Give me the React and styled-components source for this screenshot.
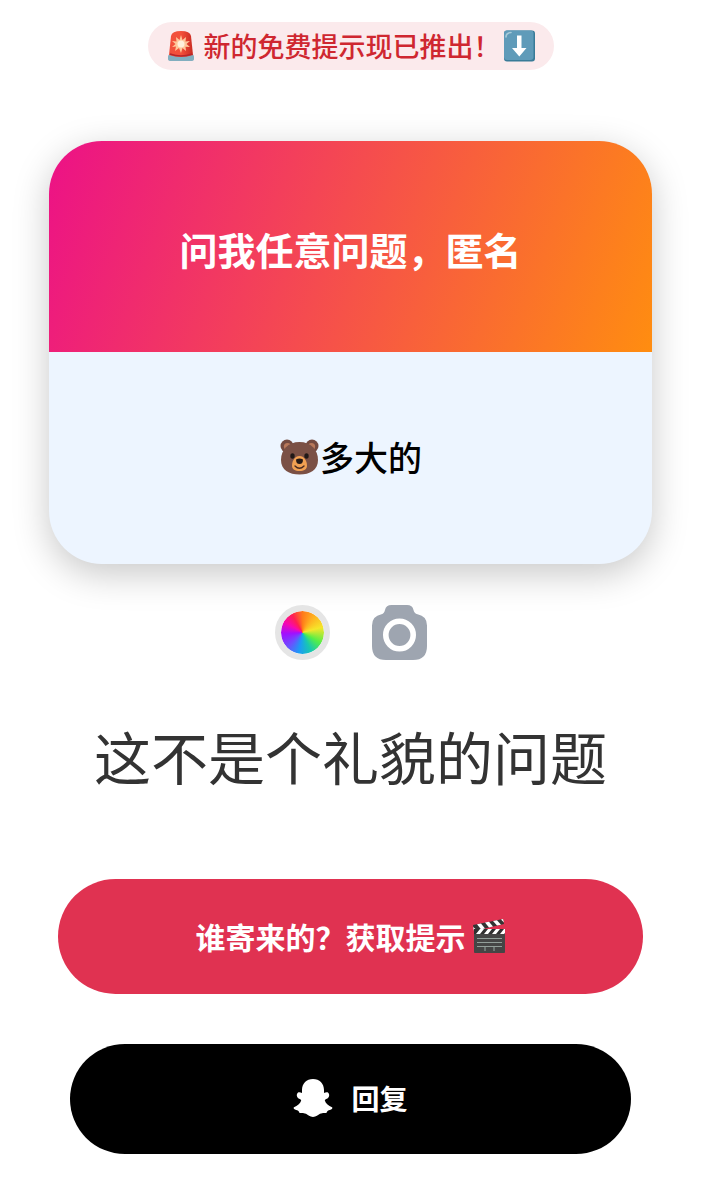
import styled, { createGlobalStyle } from "styled-components";

const theme = {
  alert: "#cf2730",
  alertBg: "#fbeaec",
  pink: "#ec1187",
  orange: "#ff8d10",
  cardBg: "#edf5ff",
  text: "#333333",
  grey: "#9ea5b0",
  red: "#e03251",
};

const GlobalStyle = createGlobalStyle`
  * {
    box-sizing: border-box;
  }

  body {
    margin: 0;
    background: #ffffff;
    font-family: "Noto Sans CJK SC", "Noto Sans", sans-serif;
  }

  button {
    font-family: inherit;
    cursor: pointer;
  }
`;

// --- STYLED COMPONENTS ---

const Page = styled.main`
  display: flex;
  flex-direction: column;
  padding: 22px 49px 44px;
`;

const Banner = styled.a`
  display: flex;
  align-items: center;
  align-self: center;
  height: 48px;
  padding: 0 18px;
  border-radius: 24px;
  background: ${theme.alertBg};
  color: ${theme.alert};
  font-size: 27px;
  font-weight: 500;
  line-height: 40px;
  text-decoration: none;
  white-space: nowrap;

  svg:first-child {
    margin-right: 8px;
  }

  svg:last-child {
    margin-left: 2px;
  }
`;

const Card = styled.section`
  margin-top: 71px;
  overflow: hidden;
  border-radius: 53px;
  background: ${theme.cardBg};
  box-shadow: 0 10px 36px rgba(0, 0, 0, 0.22);
  text-align: center;
`;

const CardTitle = styled.h1`
  margin: 0;
  padding: 80px 24px 76px;
  background: linear-gradient(110deg, ${theme.pink}, ${theme.orange});
  color: #ffffff;
  font-size: 38px;
  font-weight: 700;
  line-height: 55px;
`;

const Question = styled.p`
  display: flex;
  align-items: center;
  justify-content: center;
  margin: 0;
  padding: 79px 24px 81px;
  color: #000000;
  font-size: 34px;
  font-weight: 500;
  line-height: 52px;
`;

const Tools = styled.div`
  display: flex;
  justify-content: center;
  gap: 42px;
  margin-top: 41px;
`;

const IconButton = styled.button`
  display: flex;
  padding: 0;
  border: none;
  background: none;
`;

const ColorWheel = styled.span`
  width: 55px;
  height: 55px;
  border: 6px solid #e5e5e5;
  border-radius: 50%;
  background: conic-gradient(
      #ff7a1a,
      #ffb020 35deg,
      #f5e62a 75deg,
      #55ee48 120deg,
      #18c8b0 155deg,
      #1b9cf5 190deg,
      #6b50ff 225deg,
      #a010ff 265deg,
      #f808b0 300deg,
      #ff2050 330deg,
      #ff7a1a
    )
    padding-box;
`;

const Answer = styled.p`
  margin: 54px 0 0;
  color: ${theme.text};
  font-size: 57px;
  font-weight: 400;
  line-height: 82px;
  text-align: center;
`;

const Actions = styled.div`
  display: flex;
  flex-direction: column;
  gap: 50px;
  margin-top: 83px;
`;

const ActionButton = styled.button`
  display: flex;
  align-items: center;
  justify-content: center;
  gap: ${({ $gap }) => $gap}px;
  height: ${({ $height }) => $height}px;
  margin: 0 ${({ $inset }) => $inset}px;
  padding: 0 0 2px;
  border: none;
  border-radius: 60px;
  background: ${({ $color }) => $color};
  color: #ffffff;
  font-size: ${({ $size }) => $size}px;
  font-weight: 700;
  line-height: 44px;
`;

// --- ICONS ---

const SirenIcon = () => (
  <svg width="30" height="32" viewBox="0 0 30 32" aria-hidden="true">
    <defs>
      <linearGradient id="siren" x1="0" x2="1">
        <stop offset="0" stopColor="#f0503c" />
        <stop offset="0.5" stopColor="#f4503a" />
        <stop offset="1" stopColor="#c92a22" />
      </linearGradient>
    </defs>
    <path d="M2 27 Q2 24 5 24 H25 Q28 24 28 27 V29 Q28 31 25 31 H5 Q2 31 2 29Z" fill="#82aebf" />
    <path d="M3 25 L5 6 Q6 1 15 1 Q24 1 25 6 L27 25 Q15 29 3 25Z" fill="url(#siren)" />
    <path d="M4 24 Q15 28 26 24" fill="none" stroke="#b9262a" strokeWidth="1.4" />
    <path
      d="M15 5 L16.5 10 L20 7 L19.5 11.5 L24 11 L20.5 14 L24 17 L19.5 16.8 L20 21 L16.5 18 L15 23 L13 18 L9 21 L10 16.5 L6 17 L9.5 14 L6 11 L10.5 11.5 L10 7 L13.5 10Z"
      fill="#ffc79b"
    />
    <circle cx="15" cy="14" r="3.5" fill="#fff0dc" />
  </svg>
);

const DownArrowIcon = () => (
  <svg width="33" height="32" viewBox="0 0 33 32" aria-hidden="true">
    <rect x="1" y="0.5" width="31" height="31" rx="3" fill="#397b98" />
    <rect x="1" y="0.5" width="29.5" height="29.5" rx="3" fill="#5f9bb9" />
    <path d="M3 7 Q3 3 8 2.5" fill="none" stroke="#a7cbd9" strokeWidth="1.6" strokeLinecap="round" />
    <path d="M14 5.5 H18.5 V18 H23.5 L16.3 26.5 L9 18 H14Z" fill="#ffffff" />
  </svg>
);

const BearIcon = () => (
  <svg width="41" height="38" viewBox="0 0 41 38" aria-hidden="true">
    <circle cx="8" cy="8" r="6.5" fill="#744a40" />
    <circle cx="33" cy="8" r="6.5" fill="#744a40" />
    <circle cx="8.5" cy="8.5" r="3.6" fill="#b8785a" />
    <circle cx="32.5" cy="8.5" r="3.6" fill="#b8785a" />
    <path
      d="M20.5 4 C32 4 39 12 39 22 C39 32 31 36.5 20.5 36.5 C10 36.5 2 32 2 22 C2 12 9 4 20.5 4Z"
      fill="#7b5045"
    />
    <path
      d="M20.5 18 C25 18 28 23 28 27.5 C28 31.5 25 33 20.5 33 C16 33 13 31.5 13 27.5 C13 23 16 18 20.5 18Z"
      fill="#f2a052"
    />
    <ellipse cx="13.5" cy="18" rx="2.2" ry="2.7" fill="#201817" />
    <ellipse cx="27.5" cy="18" rx="2.2" ry="2.7" fill="#201817" />
    <path d="M17 21.5 Q20.5 19.5 24 21.5 Q24 26 20.5 26 Q17 26 17 21.5Z" fill="#261a18" />
    <path d="M16 28 Q20.5 32.5 25 28" fill="none" stroke="#4a2a20" strokeWidth="1.4" strokeLinecap="round" />
  </svg>
);

const CameraIcon = () => (
  <svg width="55" height="55" viewBox="0 0 55 55" aria-hidden="true">
    <path
      d="M19.5 0 H35 Q40.5 0 41.5 5 Q42.2 8.6 45.5 9.2 Q55 11 55 20.5 V41 Q55 55 41 55 H14 Q0 55 0 41 V20.5 Q0 11 9.5 9.2 Q12.3 8.6 13 5 Q14 0 19.5 0Z"
      fill={theme.grey}
    />
    <circle cx="27.5" cy="30" r="13.7" fill="none" stroke="#ffffff" strokeWidth="5.6" />
  </svg>
);

const ClapperIcon = () => (
  <svg width="34" height="36" viewBox="0 0 34 36" aria-hidden="true">
    <rect x="2" y="12" width="31" height="23" rx="1" fill="#454545" />
    <path d="M1 7 L31 1 L32 6 L2 13Z" fill="#343434" />
    <path d="M5 6.2 L9 5.4 L13 10.4 L9 11.3Z M13 4.6 L17 3.8 L21 8.5 L17 9.4Z M21 3 L25 2.2 L29 6.7 L25 7.6Z" fill="#ffffff" />
    <path d="M29 1.4 L31 1 L32 4.5Z M1 9 L5 12.3 L2 13Z" fill="#ffffff" />
    <rect x="2" y="11" width="31" height="5" fill="#303030" />
    <path d="M8 11 H12 L8 16 H4Z M16 11 H20 L16 16 H12Z M24 11 H28 L24 16 H20Z M32 11 H33 V15 L32 16 H28Z" fill="#ffffff" />
    <path d="M5 20.5 H30 M5 24.5 H30 M5 28.5 H30 M13 29 V33 M22 29 V33" stroke="#929e99" strokeWidth="1.1" />
  </svg>
);

const GhostIcon = () => (
  <svg width="40" height="40" viewBox="0 0 40 40" aria-hidden="true">
    <path
      d="M20 1 C26.5 1 31 5.5 31 12 L31 15 C32.3 14.6 34 13.8 35.2 14.8 C36.8 16.2 36.4 19.2 34.8 20.2 C33.6 21 31.8 21.2 31.8 22.6 C32.8 25.6 35.6 28 39 29.2 C39.8 29.8 39.4 30.8 38 31.4 C36.5 32 34.9 32.2 34.3 33.2 C33.9 34.4 33.6 35 32.6 35 C30.8 35 29 34.8 27 35.8 C25 37 23.2 39 20 39 C16.8 39 15 37 13 35.8 C11 34.8 9.2 35 7.4 35 C6.4 35 6.1 34.4 5.7 33.2 C5.1 32.2 3.5 32 2 31.4 C0.6 30.8 0.2 29.8 1 29.2 C4.4 28 7.2 25.6 8.2 22.6 C8.2 21.2 6.4 21 5.2 20.2 C3.6 19.2 3.2 16.2 4.8 14.8 C6 13.8 7.7 14.6 9 15 L9 12 C9 5.5 13.5 1 20 1Z"
      fill="#ffffff"
    />
  </svg>
);

// --- PAGE ---

const App = () => {
  return (
    <>
      <GlobalStyle />
      <Page>
        <Banner href="#hint">
          <SirenIcon />
          新的免费提示现已推出！
          <DownArrowIcon />
        </Banner>

        <Card>
          <CardTitle>问我任意问题，匿名</CardTitle>
          <Question>
            <BearIcon />
            多大的
          </Question>
        </Card>

        <Tools>
          <IconButton type="button" aria-label="颜色">
            <ColorWheel />
          </IconButton>
          <IconButton type="button" aria-label="相机">
            <CameraIcon />
          </IconButton>
        </Tools>

        <Answer>这不是个礼貌的问题</Answer>

        <Actions>
          <ActionButton id="hint" type="button" $color={theme.red} $height={115} $inset={9} $size={30} $gap={6}>
            谁寄来的？获取提示
            <ClapperIcon />
          </ActionButton>
          <ActionButton type="button" $color="#000000" $height={110} $inset={21} $size={28} $gap={18}>
            <GhostIcon />
            回复
          </ActionButton>
        </Actions>
      </Page>
    </>
  );
};

export default App;
